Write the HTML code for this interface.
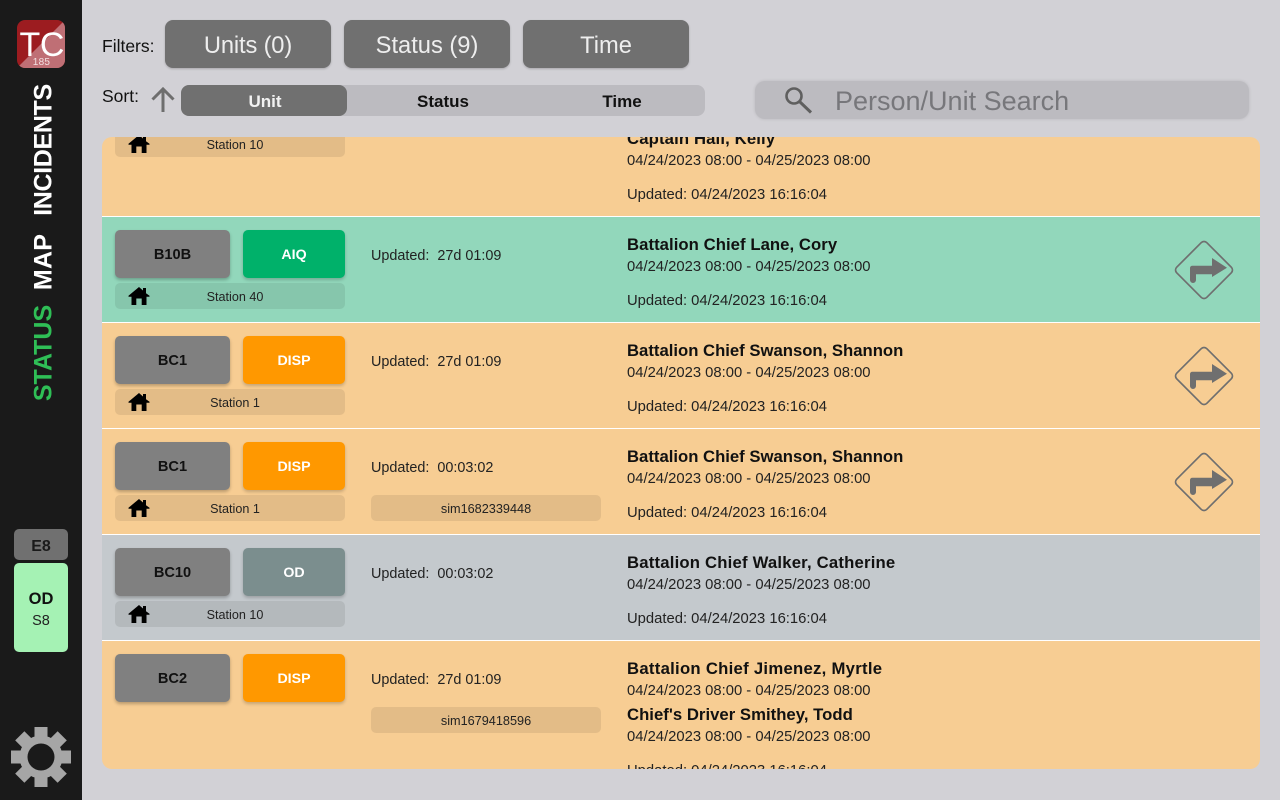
<!DOCTYPE html>
<html><head><meta charset="utf-8"><style>
html,body{margin:0;padding:0;width:1280px;height:800px;overflow:hidden;background:#d2d1d6;font-family:"Liberation Sans",sans-serif;color:#111}
*{box-sizing:border-box}
.a{position:absolute;white-space:nowrap}
.side{position:absolute;left:0;top:0;width:82px;height:800px;background:#1a1a1a}
.btn{position:absolute;top:20px;width:166px;height:48px;background:#707070;border-radius:8px;color:#eee;font-size:23.7px;text-align:center;line-height:52.5px;box-shadow:0 1px 2px rgba(0,0,0,.2)}
.vt{position:absolute;left:43.5px;transform:translate(-50%,-50%) rotate(-90deg);font-weight:bold;font-size:25px;color:#fff;white-space:nowrap}
.list{position:absolute;left:102px;top:137px;width:1158px;height:632px;border-radius:10px;overflow:hidden;background:#f7cd93}
.row{position:absolute;left:0;width:1158px;height:106px;border-bottom:1px solid #fff}
.u{position:absolute;left:13px;top:13px;width:115px;height:48px;background:#808080;border-radius:5px;text-align:center;line-height:50px;font-weight:bold;font-size:14.6px;box-shadow:0 2px 3px rgba(0,0,0,.25);color:#111}
.s{position:absolute;left:141px;top:13px;width:102px;height:48px;border-radius:5px;text-align:center;line-height:50px;font-weight:bold;font-size:14.2px;color:#fff;box-shadow:0 2px 3px rgba(0,0,0,.2)}
.st{position:absolute;left:13px;top:66px;width:230px;height:26px;border-radius:5px;background:rgba(0,0,0,.08);font-size:12.6px;line-height:28px;text-align:center;padding-left:10px;color:#222}
.st svg{position:absolute;left:13px;top:2px}
.up{position:absolute;left:269px;top:30px;font-size:14.4px;line-height:18px;white-space:pre;color:#222}
.sim{position:absolute;left:269px;top:66px;width:230px;height:26px;border-radius:5px;background:rgba(0,0,0,.08);font-size:12.7px;line-height:28px;text-align:center;color:#222}
.n{position:absolute;left:525px;font-size:16.7px;font-weight:bold;line-height:22px;white-space:nowrap;color:#111}
.d{position:absolute;left:525px;font-size:14.8px;line-height:18px;white-space:nowrap;color:#222}
.tr{position:absolute;left:1070px;top:21px}
</style></head><body>
<div class="side"></div>
<svg class="a" style="left:17px;top:20px" width="48" height="48" viewBox="0 0 48 48"><defs><clipPath id="lg"><rect width="48" height="48" rx="8"/></clipPath></defs><g clip-path="url(#lg)"><rect width="48" height="48" fill="#9c1c20"/><polygon points="48,0 48,48 0,48" fill="#bf6f75"/></g><text x="2.5" y="36" font-family="Liberation Sans" font-size="34" letter-spacing="-.4" fill="#fff">TC</text><text x="24.5" y="45" text-anchor="middle" font-family="Liberation Sans" font-size="10" letter-spacing=".3" fill="#f2dfe0">185</text></svg>
<div class="vt" style="top:149.5px;letter-spacing:-.35px">INCIDENTS</div>
<div class="vt" style="top:261.5px;letter-spacing:.2px">MAP</div>
<div class="vt" style="top:353px;color:#2fbf56">STATUS</div>
<div class="a" style="left:14px;top:529px;width:54px;height:31px;background:#707070;border-radius:5px;text-align:center;font-weight:bold;font-size:16px;line-height:35px;color:#1a1a1a">E8</div>
<div class="a" style="left:14px;top:563px;width:54px;height:89px;background:#a5f2b4;border-radius:5px"></div>
<div class="a" style="left:14px;top:589px;width:54px;text-align:center;font-weight:bold;font-size:16.5px;line-height:20px;color:#111">OD</div>
<div class="a" style="left:14px;top:612px;width:54px;text-align:center;font-size:14.5px;line-height:18px;color:#222">S8</div>
<svg class="a" style="left:11px;top:727px" width="60" height="60" viewBox="0 0 60 60"><g fill="#a6a6a6"><rect x="23.5" y="0" width="13" height="60"/><rect x="0" y="23.5" width="60" height="13"/><rect x="23.5" y="0" width="13" height="60" transform="rotate(45 30 30)"/><rect x="0" y="23.5" width="60" height="13" transform="rotate(45 30 30)"/><circle cx="30" cy="30" r="21.5"/></g><circle cx="30" cy="30" r="13.5" fill="#1a1a1a"/></svg>

<div class="a" style="left:102px;top:36px;font-size:17.5px;line-height:20px">Filters:</div>
<div class="btn" style="left:165px;letter-spacing:-.15px">Units (0)</div>
<div class="btn" style="left:344px">Status (9)</div>
<div class="btn" style="left:523px">Time</div>
<div class="a" style="left:102px;top:86px;font-size:17.5px;line-height:20px">Sort:</div>
<svg class="a" style="left:150px;top:85px" width="26" height="28" viewBox="0 0 26 28"><path d="M13 27V5M2.500 14.500 13 4 23.500 14.500" fill="none" stroke="#6e6e6e" stroke-width="3"/></svg>
<div class="a" style="left:181px;top:85px;width:524px;height:31px;background:#bcbbc0;border-radius:8px"></div>
<div class="a" style="left:181px;top:85px;width:166px;height:31px;background:#707070;border-radius:8px;color:#f2f2f2;font-weight:bold;font-size:17px;line-height:33px;text-align:center;padding-left:2px">Unit</div>
<div class="a" style="left:360px;top:85px;width:166px;height:31px;font-weight:bold;font-size:17px;line-height:33px;text-align:center">Status</div>
<div class="a" style="left:539px;top:85px;width:166px;height:31px;font-weight:bold;font-size:17px;line-height:33px;text-align:center">Time</div>
<div class="a" style="left:755px;top:81px;width:494px;height:38px;background:#bcbbc0;border-radius:10px;box-shadow:0 0 3px rgba(0,0,0,.12)"></div>
<svg class="a" style="left:784px;top:85px" width="30" height="30" viewBox="0 0 30 30"><circle cx="10" cy="11" r="7.5" fill="none" stroke="#5f5f5f" stroke-width="2.6"/><path d="M15.500 16.500 27 27.500" stroke="#5f5f5f" stroke-width="3"/></svg>
<div class="a" style="left:835px;top:85px;font-size:27px;line-height:32px;color:#77777b">Person/Unit Search</div>

<svg width="0" height="0" style="position:absolute"><defs>
<symbol id="h" viewBox="0 0 22 20"><path d="M11 2 15 5.500V3H18V8.200L21.500 10.800V11.800H18.500V20H13.700V13.500H8.300V20H3.500V11.800H.5V10.800Z" fill="#000"/></symbol>
<symbol id="t" viewBox="0 0 64 64"><rect x="10.700" y="10.700" width="42.600" height="42.600" rx="4" transform="rotate(45 32 32)" fill="none" stroke="#6f6f6f" stroke-width="1.700"/><path d="M18 30a2.300 2.300 0 0 1 2.300-2.300H40V20L55 29.700 40 39V36.300H24V42a3 3 0 0 1-6 0Z" fill="#6f6f6f"/></symbol>
</defs></svg>

<div class="list">
<div class="row" style="top:-26px">
<div class="st" style="top:20px"><svg width="22" height="20"><use href="#h"/></svg>Station 10</div>
<div class="n" style="top:17px;letter-spacing:.14px">Captain Hall, Kelly</div>
<div class="d" style="top:41px">04/24/2023 08:00 - 04/25/2023 08:00</div>
<div class="d" style="top:75px">Updated: 04/24/2023 16:16:04</div>
</div>
<div class="row" style="top:80px;background:#92d7bb">
<div class="u">B10B</div><div class="s" style="background:#00b16a">AIQ</div>
<div class="st"><svg width="22" height="20"><use href="#h"/></svg>Station 40</div>
<div class="up">Updated:  27d 01:09</div>
<div class="n" style="top:17px;letter-spacing:.06px">Battalion Chief Lane, Cory</div>
<div class="d" style="top:41px">04/24/2023 08:00 - 04/25/2023 08:00</div>
<div class="d" style="top:75px">Updated: 04/24/2023 16:16:04</div>
<svg class="tr" width="64" height="64"><use href="#t"/></svg>
</div>
<div class="row" style="top:186px">
<div class="u">BC1</div><div class="s" style="background:#ff9800">DISP</div>
<div class="st"><svg width="22" height="20"><use href="#h"/></svg>Station 1</div>
<div class="up">Updated:  27d 01:09</div>
<div class="n" style="top:17px">Battalion Chief Swanson, Shannon</div>
<div class="d" style="top:41px">04/24/2023 08:00 - 04/25/2023 08:00</div>
<div class="d" style="top:75px">Updated: 04/24/2023 16:16:04</div>
<svg class="tr" width="64" height="64"><use href="#t"/></svg>
</div>
<div class="row" style="top:292px">
<div class="u">BC1</div><div class="s" style="background:#ff9800">DISP</div>
<div class="st"><svg width="22" height="20"><use href="#h"/></svg>Station 1</div>
<div class="up">Updated:  00:03:02</div>
<div class="sim">sim1682339448</div>
<div class="n" style="top:17px">Battalion Chief Swanson, Shannon</div>
<div class="d" style="top:41px">04/24/2023 08:00 - 04/25/2023 08:00</div>
<div class="d" style="top:75px">Updated: 04/24/2023 16:16:04</div>
<svg class="tr" width="64" height="64"><use href="#t"/></svg>
</div>
<div class="row" style="top:398px;background:#c4c9cd">
<div class="u">BC10</div><div class="s" style="background:#7b8e8e">OD</div>
<div class="st"><svg width="22" height="20"><use href="#h"/></svg>Station 10</div>
<div class="up">Updated:  00:03:02</div>
<div class="n" style="top:17px;letter-spacing:.2px">Battalion Chief Walker, Catherine</div>
<div class="d" style="top:41px">04/24/2023 08:00 - 04/25/2023 08:00</div>
<div class="d" style="top:75px">Updated: 04/24/2023 16:16:04</div>
</div>
<div class="row" style="top:504px;height:140px;border-bottom:0">
<div class="u">BC2</div><div class="s" style="background:#ff9800">DISP</div>
<div class="up">Updated:  27d 01:09</div>
<div class="sim">sim1679418596</div>
<div class="n" style="top:17px;letter-spacing:.28px">Battalion Chief Jimenez, Myrtle</div>
<div class="d" style="top:41px">04/24/2023 08:00 - 04/25/2023 08:00</div>
<div class="n" style="top:63px;letter-spacing:.03px">Chief's Driver Smithey, Todd</div>
<div class="d" style="top:87px">04/24/2023 08:00 - 04/25/2023 08:00</div>
<div class="d" style="top:121px">Updated: 04/24/2023 16:16:04</div>
</div>
</div>
</body></html>
